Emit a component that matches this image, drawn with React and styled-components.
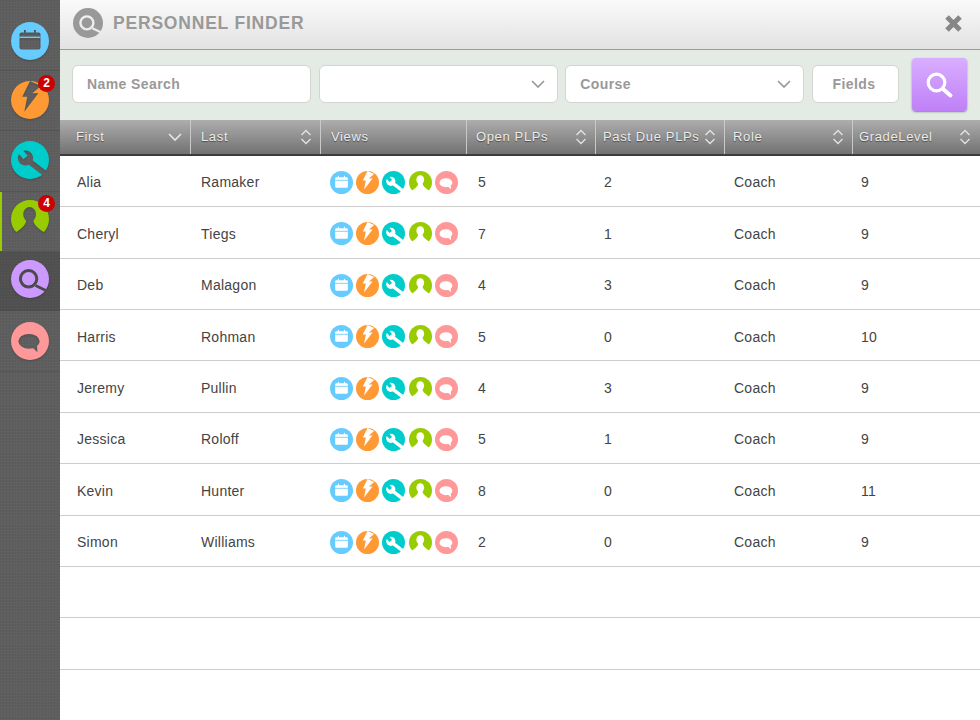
import React from 'react';
import styled, { createGlobalStyle } from 'styled-components';

const GlobalStyle = createGlobalStyle`
  html, body {
    margin: 0;
    padding: 0;
    background: #fff;
  }
  * {
    box-sizing: border-box;
  }
`;

const COLORS = {
  calendar: '#66ccff',
  bolt: '#ff9933',
  wrench: '#00cccc',
  person: '#99cc00',
  search: '#cc99ff',
  chat: '#ff9999',
};

// column widths add up to the 920px main area
const COLUMNS = [
  { label: 'First', width: 131, headPad: 16, cellPad: 17, sort: 'down' },
  { label: 'Last', width: 130, headPad: 10, cellPad: 10, sort: 'both' },
  { label: 'Views', width: 146, headPad: 10, cellPad: 9 },
  { label: 'Open PLPs', width: 129, headPad: 9, cellPad: 11, sort: 'both' },
  { label: 'Past Due PLPs', width: 129, headPad: 7, cellPad: 8, sort: 'both' },
  { label: 'Role', width: 128, headPad: 8, cellPad: 9, sort: 'both' },
  { label: 'GradeLevel', width: 127, headPad: 6, cellPad: 8, sort: 'both' },
];

const GRID = COLUMNS.map((c) => `${c.width}px`).join(' ');

const PEOPLE = [
  ['Alia', 'Ramaker', 5, 2, 'Coach', 9],
  ['Cheryl', 'Tiegs', 7, 1, 'Coach', 9],
  ['Deb', 'Malagon', 4, 3, 'Coach', 9],
  ['Harris', 'Rohman', 5, 0, 'Coach', 10],
  ['Jeremy', 'Pullin', 4, 3, 'Coach', 9],
  ['Jessica', 'Roloff', 5, 1, 'Coach', 9],
  ['Kevin', 'Hunter', 8, 0, 'Coach', 11],
  ['Simon', 'Williams', 2, 0, 'Coach', 9],
];

const NAV = [
  { icon: 'calendar', h: 59, pt: 10 },
  { icon: 'bolt', h: 60, pt: 10, badge: 2, badgeTop: 4 },
  { icon: 'wrench', h: 61, pt: 10 },
  { icon: 'person', h: 60, pt: 8, badge: 4, badgeTop: 3, current: true },
  { icon: 'search', h: 59, pt: 8, selected: true },
  { icon: 'chat', h: 61, pt: 11 },
];

const Page = styled.div`
  display: flex;
  width: 980px;
  height: 720px;
  overflow: hidden;
  font-family: 'Liberation Sans', Arial, sans-serif;
`;

const Rail = styled.nav`
  width: 60px;
  flex: none;
  padding-top: 12px;
  background-color: #5e5e5e;
  background-image:
    repeating-linear-gradient(0deg, rgba(255, 255, 255, 0.025) 0 1px, transparent 1px 3px),
    repeating-linear-gradient(90deg, rgba(0, 0, 0, 0.035) 0 1px, transparent 1px 3px);
`;

const NavItem = styled.div`
  position: relative;
  display: flex;
  justify-content: center;
  height: ${(p) => p.$h}px;
  padding-top: ${(p) => p.$pt}px;
  border-bottom: 1px solid rgba(70, 70, 70, 0.4);
  background: ${(p) => (p.$selected ? 'rgba(0, 0, 0, 0.14)' : 'transparent')};
  box-shadow: ${(p) => (p.$current ? 'inset 2px 0 0 #99cc00' : 'none')};
`;

const NavDisc = styled.div`
  width: 38px;
  height: 38px;
  border-radius: 50%;
  filter: drop-shadow(0 1px 1px rgba(0, 0, 0, 0.2));
`;

const Badge = styled.span`
  position: absolute;
  top: ${(p) => p.$top}px;
  left: 38px;
  width: 17px;
  height: 17px;
  border-radius: 50%;
  background: #cc0000;
  color: #fff;
  font-size: 12px;
  font-weight: 700;
  line-height: 17px;
  text-align: center;
`;

const Main = styled.main`
  flex: 1;
  display: flex;
  flex-direction: column;
  min-width: 0;
  background: #fff;
`;

const Header = styled.header`
  display: flex;
  align-items: center;
  height: 50px;
  padding: 0 17px 3px 13px;
  background: linear-gradient(#fafafa, #e2e2e2);
  border-bottom: 1px solid #9a9a9a;
`;

const Title = styled.h1`
  flex: 1;
  margin: 0 0 0 10px;
  color: #999;
  font-size: 17.5px;
  font-weight: 700;
  letter-spacing: 0.8px;
`;

const Toolbar = styled.div`
  display: flex;
  align-items: center;
  gap: 7.67px;
  height: 70px;
  padding: 0 13px 2px 12px;
  background: #e4ebe4;
`;

const fieldBox = `
  height: 38px;
  border: 1px solid #d2d5d0;
  border-radius: 6px;
  background: #fff;
  color: #999;
  font-family: 'Liberation Sans', Arial, sans-serif;
  font-size: 14px;
  font-weight: 700;
  letter-spacing: 0.4px;
`;

const SearchInput = styled.input`
  ${fieldBox}
  width: 239px;
  padding: 0 14px;
  outline: none;

  &::placeholder {
    color: #999;
    opacity: 1;
  }
`;

const Select = styled.div`
  ${fieldBox}
  display: flex;
  align-items: center;
  justify-content: space-between;
  width: 239px;
  padding: 0 12px 0 14px;
`;

const FieldsButton = styled.div`
  ${fieldBox}
  display: flex;
  align-items: center;
  justify-content: center;
  width: 87px;
  padding-right: 3px;
`;

const GoButton = styled.div`
  display: flex;
  align-items: center;
  justify-content: center;
  width: 55px;
  height: 53px;
  margin: 1px 0 0 5.33px;
  border-radius: 4px;
  background: linear-gradient(#d9aeff, #bf80f7);
  box-shadow: 0 1px 2px rgba(0, 0, 0, 0.45);
`;

const HeadRow = styled.div`
  display: grid;
  grid-template-columns: ${GRID};
  height: 35.8px;
  background: linear-gradient(#adadad, #727272);
  border-bottom: 2px solid #3c3c3c;
`;

const HeadCell = styled.div`
  display: flex;
  align-items: center;
  justify-content: space-between;
  padding: 0 8px 0 ${(p) => p.$pad}px;
  border-right: 1px solid ${(p) => (p.$last ? 'transparent' : '#c9c9c9')};
  color: #ececec;
  font-size: 13px;
  letter-spacing: 0.64px;
  text-shadow: 0 1px 1px rgba(0, 0, 0, 0.45);
  white-space: nowrap;
`;

const Row = styled.div`
  display: grid;
  grid-template-columns: ${GRID};
  height: 51.4px;
  padding-top: 3px;
  border-bottom: 1px solid #cdcdcd;
`;

const Cell = styled.div`
  display: flex;
  align-items: center;
  gap: 3.2px;
  padding-left: ${(p) => p.$pad}px;
  color: #444;
  font-size: 14px;
  letter-spacing: 0.25px;
`;

const MiniDisc = styled.div`
  width: 23px;
  height: 23px;
  flex: none;
`;

// black knocks a shape out of the disc, white puts it back
function IconMarks({ name }) {
  switch (name) {
    case 'calendar':
      return (
        <g>
          <rect x="8.500" y="10.500" width="21" height="17" rx="2" fill="#000" />
          <rect x="13" y="8" width="1.800" height="4" fill="#000" />
          <rect x="23" y="8" width="1.800" height="4" fill="#000" />
          <rect x="8.500" y="14.600" width="21" height="1.400" fill="#fff" />
        </g>
      );
    case 'bolt':
      return <polygon points="19,0 11.300,15.700 16.300,15.700 13.300,30.700 27.300,12.300 21.300,12.300 30,5" fill="#000" />;
    case 'wrench':
      return (
        <g>
          <circle cx="14.500" cy="17" r="7.600" fill="#000" />
          <line x1="15" y1="18" x2="36" y2="34" stroke="#000" strokeWidth="5.600" />
          <line x1="14.500" y1="16.500" x2="8" y2="9" stroke="#fff" strokeWidth="5.600" />
        </g>
      );
    case 'person':
      return (
        <g>
          <ellipse cx="18.600" cy="14.400" rx="6.400" ry="7.400" fill="#000" />
          <path d="M15 19 C15.500 24 13 26.500 4 33 L4 40 L34 40 L34 33 C25 27 22 24 22.500 19 Z" fill="#000" />
        </g>
      );
    case 'search':
      return (
        <g>
          <circle cx="17.600" cy="18.800" r="8.200" fill="none" stroke="#000" strokeWidth="3" />
          <line x1="24.500" y1="25.500" x2="38" y2="32" stroke="#000" strokeWidth="2.800" />
        </g>
      );
    case 'chat':
      return (
        <g>
          <ellipse cx="18" cy="19.300" rx="10.600" ry="7.400" fill="#000" />
          <polygon points="21,25 26.400,30.200 26,23" fill="#000" />
        </g>
      );
    default:
      return null;
  }
}

function DiscIcon({ name, color, size = 38 }) {
  return (
    <svg width={size} height={size} viewBox="0 0 38 38" style={{ display: 'block' }}>
      <mask id={`cut-${name}`} maskUnits="userSpaceOnUse" x="0" y="0" width="38" height="38">
        <rect width="38" height="38" fill="#fff" />
        <IconMarks name={name} />
      </mask>
      <circle cx="19" cy="19" r="19" fill={color || COLORS[name]} mask={`url(#cut-${name})`} />
    </svg>
  );
}

function Chevron({ color = '#999', w = 12, h = 6 }) {
  return (
    <svg width={w + 2} height={h + 2} viewBox={`-1 -1 ${w + 2} ${h + 2}`} style={{ display: 'block' }}>
      <polyline points={`0,0 ${w / 2},${h} ${w},0`} fill="none" stroke={color} strokeWidth="1.7" />
    </svg>
  );
}

function SortArrows() {
  return (
    <svg width="12" height="16" viewBox="0 0 12 16" style={{ display: 'block', flex: 'none' }}>
      <polyline points="1.5,6 6,1.5 10.500,6" fill="none" stroke="#e4e4e4" strokeWidth="1.3" />
      <polyline points="1.5,10 6,14.500 10.500,10" fill="none" stroke="#e4e4e4" strokeWidth="1.3" />
    </svg>
  );
}

function CloseIcon() {
  return (
    <svg width="19" height="19" viewBox="0 0 19 19" style={{ display: 'block' }}>
      <path d="M3 3 L16 16 M16 3 L3 16" stroke="#878787" strokeWidth="5" fill="none" />
    </svg>
  );
}

function MagnifierIcon() {
  return (
    <svg width="30" height="30" viewBox="0 0 30 30" style={{ display: 'block' }}>
      <circle cx="12.500" cy="12.500" r="8.300" fill="none" stroke="#fff" strokeWidth="3.2" />
      <line x1="19" y1="19" x2="26.500" y2="25.500" stroke="#fff" strokeWidth="4" strokeLinecap="round" />
    </svg>
  );
}

function ViewIcons() {
  return ['calendar', 'bolt', 'wrench', 'person', 'chat'].map((name) => (
    <MiniDisc key={name}>
      <DiscIcon name={name} size={23} />
    </MiniDisc>
  ));
}

export default function App() {
  return (
    <Page>
      <GlobalStyle />
      <Rail>
        {NAV.map((item) => (
          <NavItem key={item.icon} $h={item.h} $pt={item.pt} $selected={item.selected} $current={item.current}>
            <NavDisc>
              <DiscIcon name={item.icon} />
            </NavDisc>
            {item.badge && <Badge $top={item.badgeTop}>{item.badge}</Badge>}
          </NavItem>
        ))}
      </Rail>

      <Main>
        <Header>
          <DiscIcon name="search" color="#999" size={30} />
          <Title>PERSONNEL FINDER</Title>
          <CloseIcon />
        </Header>

        <Toolbar>
          <SearchInput placeholder="Name Search" />
          <Select>
            <span />
            <Chevron />
          </Select>
          <Select>
            <span>Course</span>
            <Chevron />
          </Select>
          <FieldsButton>Fields</FieldsButton>
          <GoButton>
            <MagnifierIcon />
          </GoButton>
        </Toolbar>

        <HeadRow>
          {COLUMNS.map((col, i) => (
            <HeadCell key={col.label} $pad={col.headPad} $last={i === COLUMNS.length - 1}>
              {col.label}
              {col.sort === 'down' && <Chevron color="#e4e4e4" w={12} h={6} />}
              {col.sort === 'both' && <SortArrows />}
            </HeadCell>
          ))}
        </HeadRow>

        {PEOPLE.map(([first, last, open, pastDue, role, grade]) => (
          <Row key={first}>
            <Cell $pad={COLUMNS[0].cellPad}>{first}</Cell>
            <Cell $pad={COLUMNS[1].cellPad}>{last}</Cell>
            <Cell $pad={COLUMNS[2].cellPad}>
              <ViewIcons />
            </Cell>
            <Cell $pad={COLUMNS[3].cellPad}>{open}</Cell>
            <Cell $pad={COLUMNS[4].cellPad}>{pastDue}</Cell>
            <Cell $pad={COLUMNS[5].cellPad}>{role}</Cell>
            <Cell $pad={COLUMNS[6].cellPad}>{grade}</Cell>
          </Row>
        ))}
        <Row />
        <Row />
      </Main>
    </Page>
  );
}
